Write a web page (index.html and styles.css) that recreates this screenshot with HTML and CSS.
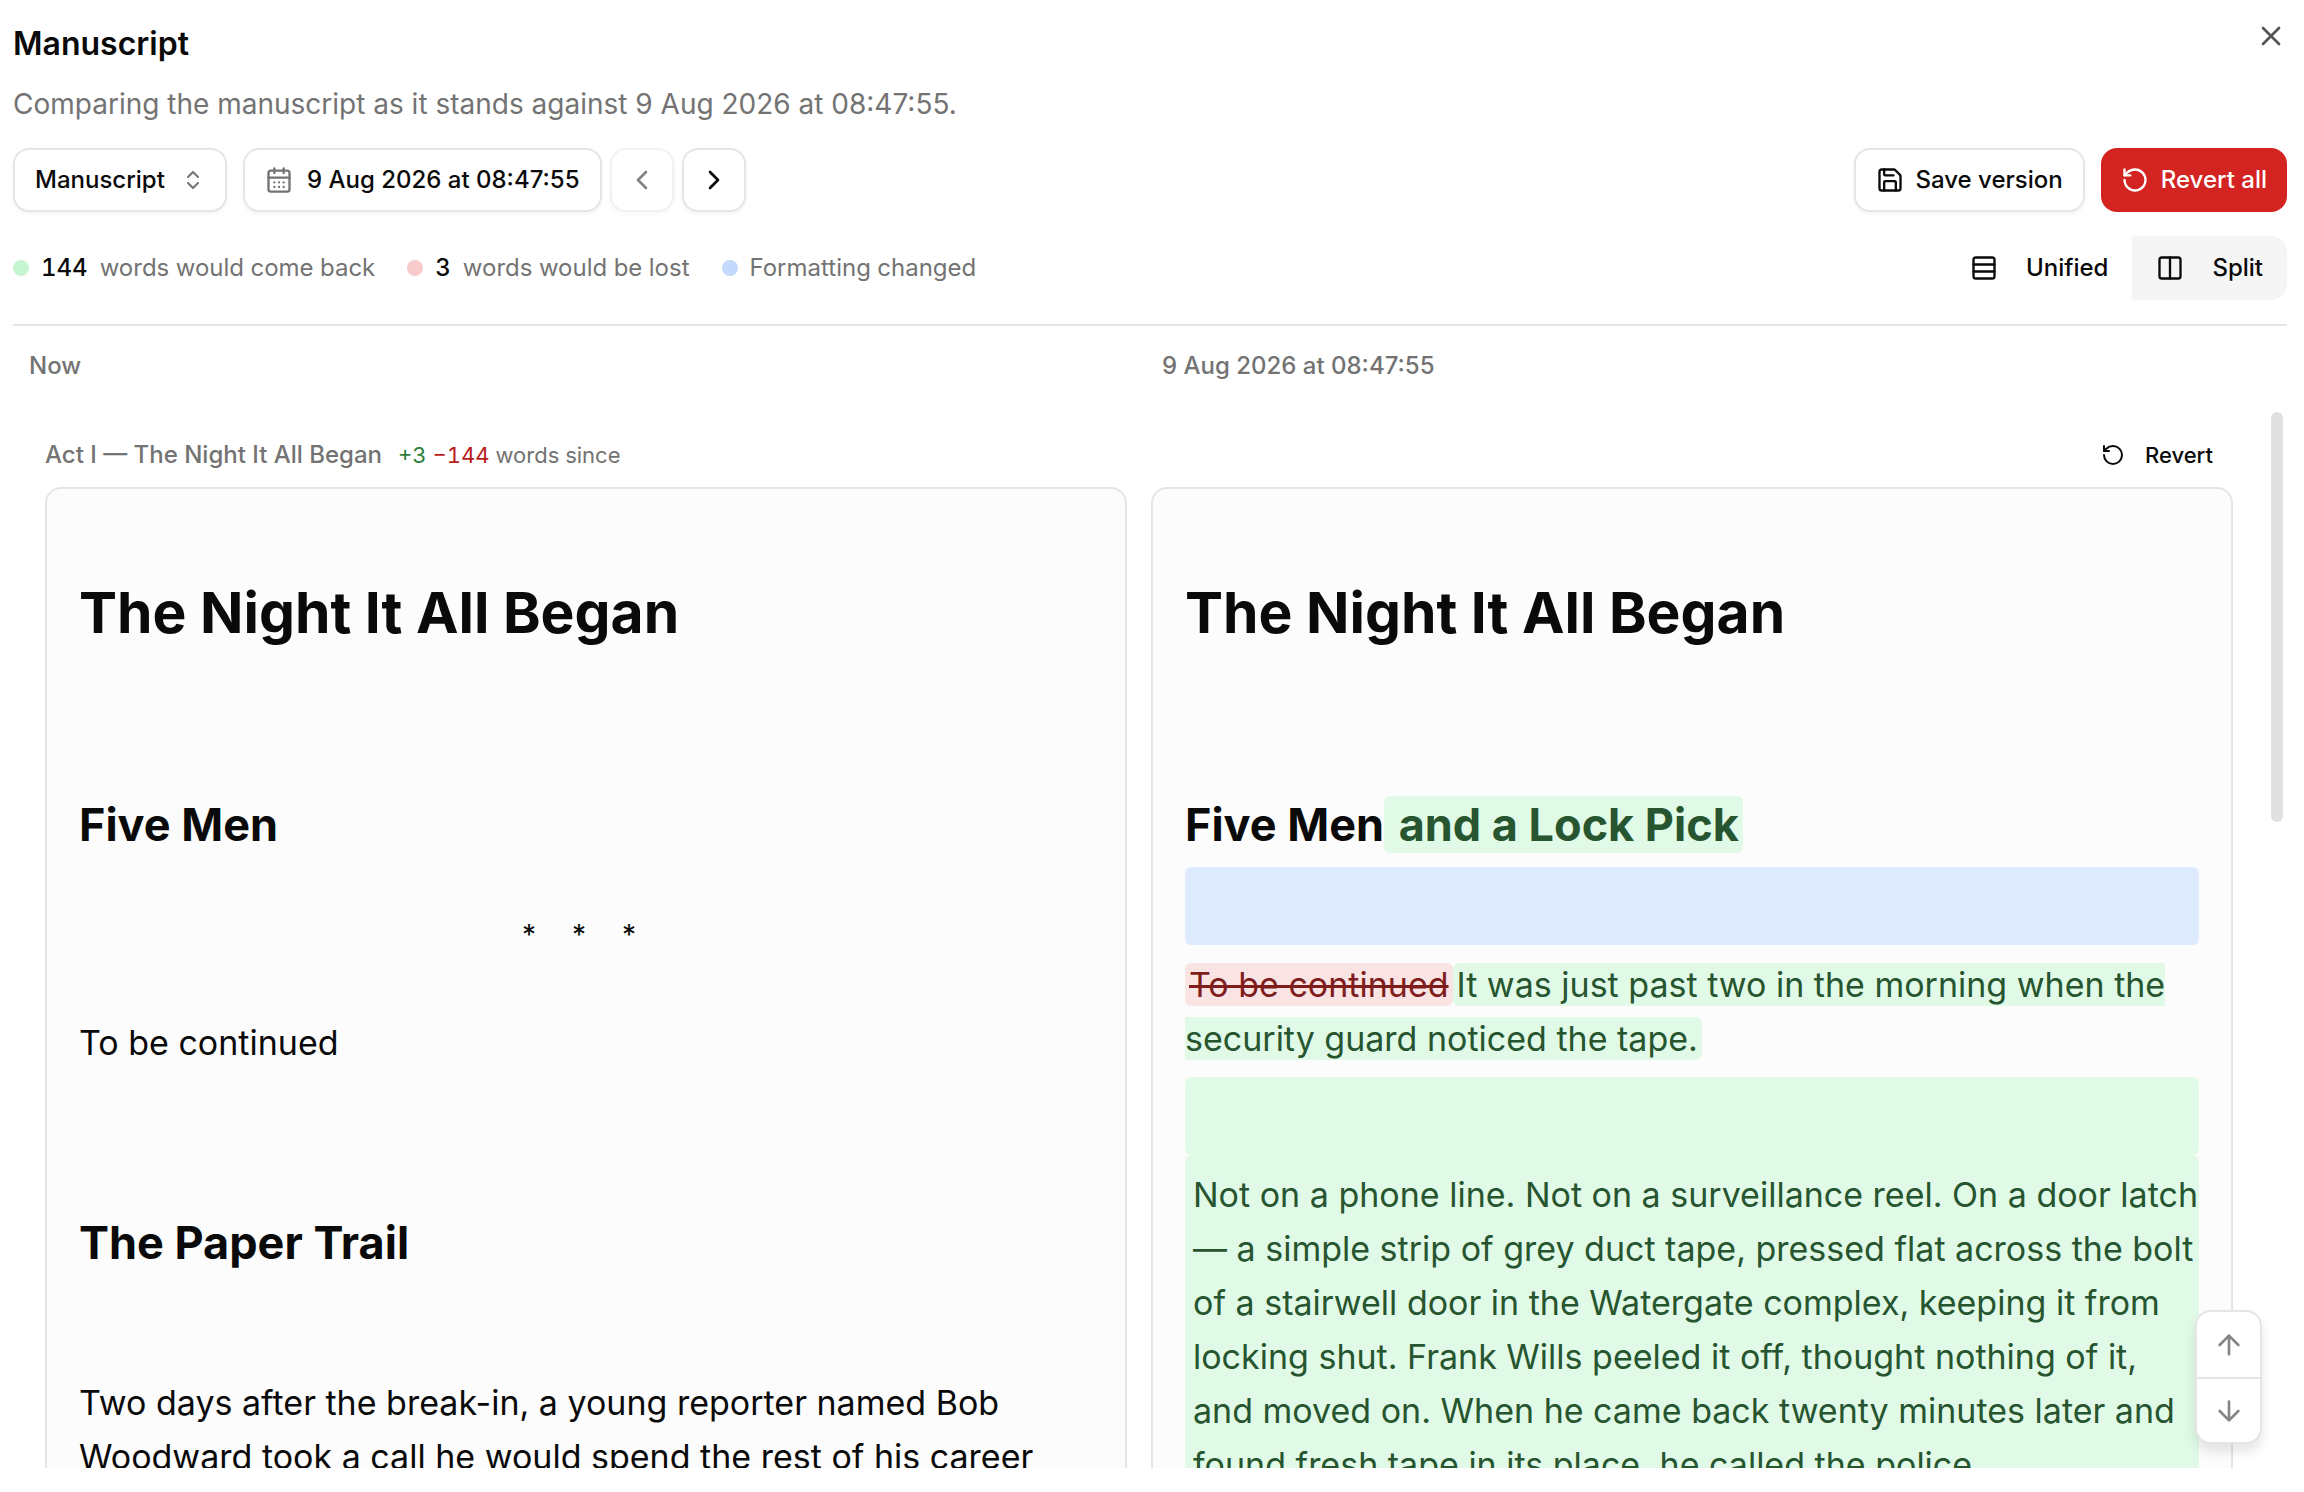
FILE: index.html
```html
<!DOCTYPE html>
<html lang="en">
<head>
<meta charset="utf-8">
<title>Manuscript</title>
<meta name="viewport" content="width=device-width, initial-scale=1">
<link rel="stylesheet" href="styles.css">
</head>
<body>
<svg class="sprite" aria-hidden="true">
  <symbol id="i-x" viewBox="0 0 24 24"><path d="M18 6 6 18M6 6l12 12"/></symbol>
  <symbol id="i-up-down" viewBox="0 0 24 24"><path d="m7 15 5 5 5-5M7 9l5-5 5 5"/></symbol>
  <symbol id="i-calendar" viewBox="0 0 24 24"><path d="M8 2v4M16 2v4"/><rect width="18" height="18" x="3" y="4" rx="2"/><path d="M3 10h18M8 14h.01M12 14h.01M16 14h.01M8 18h.01M12 18h.01M16 18h.01"/></symbol>
  <symbol id="i-left" viewBox="0 0 24 24"><path d="m15 18-6-6 6-6"/></symbol>
  <symbol id="i-right" viewBox="0 0 24 24"><path d="m9 18 6-6-6-6"/></symbol>
  <symbol id="i-save" viewBox="0 0 24 24"><path d="M15.2 3a2 2 0 0 1 1.4.6l3.8 3.8a2 2 0 0 1 .6 1.4V19a2 2 0 0 1-2 2H5a2 2 0 0 1-2-2V5a2 2 0 0 1 2-2z"/><path d="M17 21v-7a1 1 0 0 0-1-1H8a1 1 0 0 0-1 1v7M7 3v4a1 1 0 0 0 1 1h7"/></symbol>
  <symbol id="i-revert" viewBox="0 0 24 24"><path d="M3 12a9 9 0 1 0 9-9 9.75 9.75 0 0 0-6.74 2.74L3 8"/><path d="M3 3v5h5"/></symbol>
  <symbol id="i-rows" viewBox="0 0 24 24"><rect width="18" height="18" x="3" y="3" rx="2"/><path d="M21 9H3M21 15H3"/></symbol>
  <symbol id="i-columns" viewBox="0 0 24 24"><rect width="18" height="18" x="3" y="3" rx="2"/><path d="M12 3v18"/></symbol>
  <symbol id="i-up" viewBox="0 0 24 24"><path d="m5 12 7-7 7 7M12 19V5"/></symbol>
  <symbol id="i-down" viewBox="0 0 24 24"><path d="M12 5v14M19 12l-7 7-7-7"/></symbol>
</svg>

<main class="dialog">
  <header class="head">
    <div>
      <h1 class="title">Manuscript</h1>
      <p class="subtitle">Comparing the manuscript as it stands against 9 Aug 2026 at 08:47:55.</p>
    </div>
    <button class="close" type="button" aria-label="Close"><svg class="icon icon-lg"><use href="#i-x"/></svg></button>
  </header>

  <div class="bar">
    <div class="group">
      <div class="picker">
        <select class="btn select" aria-label="Scope"><option>Manuscript</option></select>
        <svg class="icon icon-sm picker-icon"><use href="#i-up-down"/></svg>
      </div>
      <div class="group tight">
        <button class="btn date" type="button"><svg class="icon muted"><use href="#i-calendar"/></svg>9 Aug 2026 at 08:47:55</button>
        <button class="btn square" type="button" aria-label="Previous version" disabled><svg class="icon icon-lg"><use href="#i-left"/></svg></button>
        <button class="btn square" type="button" aria-label="Next version"><svg class="icon icon-lg"><use href="#i-right"/></svg></button>
      </div>
    </div>
    <div class="group">
      <button class="btn" type="button"><svg class="icon"><use href="#i-save"/></svg>Save version</button>
      <button class="btn danger" type="button"><svg class="icon"><use href="#i-revert"/></svg>Revert all</button>
    </div>
  </div>

  <div class="bar summary">
    <ul class="legend">
      <li><span class="dot added"></span><strong>144</strong> words would come back</li>
      <li><span class="dot removed"></span><strong>3</strong> words would be lost</li>
      <li><span class="dot changed"></span>Formatting changed</li>
    </ul>
    <div class="toggle">
      <button class="toggle-item" type="button" aria-pressed="false"><svg class="icon"><use href="#i-rows"/></svg>Unified</button>
      <button class="toggle-item" type="button" aria-pressed="true"><svg class="icon"><use href="#i-columns"/></svg>Split</button>
    </div>
  </div>

  <div class="columns column-heads">
    <span>Now</span>
    <span>9 Aug 2026 at 08:47:55</span>
  </div>

  <div class="viewport">
    <section class="act">
      <div class="act-head">
        <h2 class="act-title">Act I — The Night It All Began</h2>
        <p class="act-count"><span class="plus">+3</span> <span class="minus">−144</span> words since</p>
        <button class="revert" type="button"><svg class="icon icon-sm"><use href="#i-revert"/></svg>Revert</button>
      </div>
      <div class="columns">
        <article class="page">
          <h3 class="h1">The Night It All Began</h3>
          <h4 class="h2">Five Men</h4>
          <div class="break"><span>*</span><span>*</span><span>*</span></div>
          <p>To be continued</p>
          <h4 class="h2 spaced">The Paper Trail</h4>
          <p></p>
          <p>Two days after the break-in, a young reporter named Bob Woodward took a call he would spend the rest of his career</p>
        </article>
        <article class="page">
          <h3 class="h1">The Night It All Began</h3>
          <h4 class="h2">Five Men<ins> and a Lock Pick</ins></h4>
          <p class="block changed-block"></p>
          <p><del>To be continued</del><ins>It was just past two in the morning when the security guard noticed the tape.</ins></p>
          <p class="block added-block"></p>
          <p class="block added-block">Not on a phone line. Not on a surveillance reel. On a door latch — a simple strip of grey duct tape, pressed flat across the bolt of a stairwell door in the Watergate complex, keeping it from locking shut. Frank Wills peeled it off, thought nothing of it, and moved on. When he came back twenty minutes later and found fresh tape in its place, he called the police.</p>
        </article>
      </div>
    </section>
    <div class="thumb"></div>
    <div class="jump">
      <button type="button" aria-label="Previous change"><svg class="icon icon-lg"><use href="#i-up"/></svg></button>
      <button type="button" aria-label="Next change"><svg class="icon icon-lg"><use href="#i-down"/></svg></button>
    </div>
  </div>
</main>
</body>
</html>
```
FILE: styles.css
```css
* { box-sizing: border-box; margin: 0; padding: 0; }

body {
  font-family: Inter, "Liberation Sans", sans-serif;
  font-size: 24px;
  line-height: 32px;
  color: #0a0a0a;
  background: #fff;
}

button, select { font: inherit; color: inherit; background: none; border: 0; }
.sprite { display: none; }

.icon {
  flex: none;
  width: 28px;
  height: 28px;
  fill: none;
  stroke: currentColor;
  stroke-width: 2;
  stroke-linecap: round;
  stroke-linejoin: round;
}
.icon-sm { width: 24px; height: 24px; }
.icon-lg { width: 32px; height: 32px; }
.muted { color: #737373; }

.dialog {
  display: flex;
  flex-direction: column;
  height: 100vh;
  padding: 20px 17px 24px 13px;
}

.head { display: flex; justify-content: space-between; align-items: flex-start; }
.title { font-size: 32px; line-height: 48px; font-weight: 600; }
.subtitle { margin-top: 16px; font-size: 28px; line-height: 40px; color: #737373; }
.close { display: flex; color: #555; }

.bar { display: flex; justify-content: space-between; align-items: center; margin-top: 24px; }
.group { display: flex; gap: 16px; }
.tight { gap: 8px; }

.btn {
  display: flex;
  align-items: center;
  justify-content: center;
  gap: 12px;
  height: 64px;
  padding: 0 20px;
  border: 2px solid #e5e5e5;
  border-radius: 16px;
  background: #fff;
  font-weight: 500;
  box-shadow: 0 2px 4px rgba(0, 0, 0, .05);
}
.btn:disabled { opacity: .5; color: inherit; }
.date { gap: 14px; }
.square { width: 64px; padding: 0; }
.danger { border: 0; background: #d32421; color: #fff; box-shadow: none; }
.picker { position: relative; }
.select { appearance: none; padding: 0 60px 0 20px; }
.picker-icon { position: absolute; right: 22px; top: 20px; color: #737373; pointer-events: none; }

.summary { padding-bottom: 24px; border-bottom: 2px solid #e5e5e5; }
.legend { display: flex; gap: 32px; list-style: none; color: #737373; font-variant-numeric: tabular-nums; }
.legend li { display: flex; align-items: center; gap: 12px; }
.legend strong { font-weight: 500; color: #0a0a0a; }
.dot { width: 16px; height: 16px; border-radius: 50%; }
.added { background: #c5f5d1; }
.removed { background: #f8caca; }
.changed { background: #c3dafd; }

.toggle { display: flex; }
.toggle-item { display: flex; align-items: center; gap: 28px; height: 64px; padding: 0 24px; font-weight: 500; }
.toggle-item[aria-pressed="true"] { background: #f5f5f5; border-radius: 0 16px 16px 0; }

.columns { display: grid; grid-template-columns: 1fr 1fr; gap: 24px; }
.column-heads { padding: 24px 16px 30px; font-weight: 500; color: #737373; }

.viewport { position: relative; flex: 1; min-height: 0; overflow: hidden; }
.act { padding: 16px 54px 0 32px; }
.act-head { display: flex; align-items: center; gap: 16px; height: 54px; margin-bottom: 5px; color: #737373; }
.act-title { font-size: 24px; font-weight: 500; }
.act-count { font-size: 22px; font-variant-numeric: tabular-nums; }
.plus { color: #2e7d3a; }
.minus { color: #b91c1c; }
.revert { display: flex; align-items: center; gap: 20px; margin-left: auto; padding: 0 20px; font-size: 22px; font-weight: 500; color: #0a0a0a; }

.page {
  min-height: 1200px;
  padding: 64px 32px;
  border: 2px solid #e5e5e5;
  border-radius: 16px;
  background: #fcfcfc;
  font-size: 34px;
  line-height: 54px;
}
.page p { min-height: 78px; padding: 13px 0 11px; }
.h1 { padding: 22px 0; font-size: 57px; line-height: 76px; font-weight: 700; }
.h2 { margin-top: 122px; padding-bottom: 12px; font-size: 45px; line-height: 60px; font-weight: 700; }
.spaced { margin-top: 132px; }
.break { display: flex; justify-content: center; gap: 36px; padding: 41px 14px 41px 0; font-size: 28px; }

ins { padding: 1px 4px; border-radius: 6px; background: #e1fae7; color: #26552f; text-decoration: none; }
del { padding: 1px 4px; border-radius: 6px; background: #fae3e3; color: #7f1d1d; text-decoration-thickness: 3px; }
.block { border-radius: 6px; }
.page .added-block { padding: 13px 0 11px 8px; background: #e1fae7; color: #26552f; }
.changed-block { background: #deeafe; }

.thumb { position: absolute; top: 0; right: 4px; width: 12px; height: 410px; border-radius: 6px; background: #e0e0e0; }

.jump {
  position: absolute;
  right: 25px;
  bottom: 24px;
  width: 67px;
  border: 2px solid #e5e5e5;
  border-radius: 16px;
  background: #fff;
  box-shadow: 0 8px 12px rgba(0, 0, 0, .1);
}
.jump button { display: flex; align-items: center; justify-content: center; width: 100%; height: 65px; color: #858585; }
.jump button + button { border-top: 2px solid #e5e5e5; }
```
